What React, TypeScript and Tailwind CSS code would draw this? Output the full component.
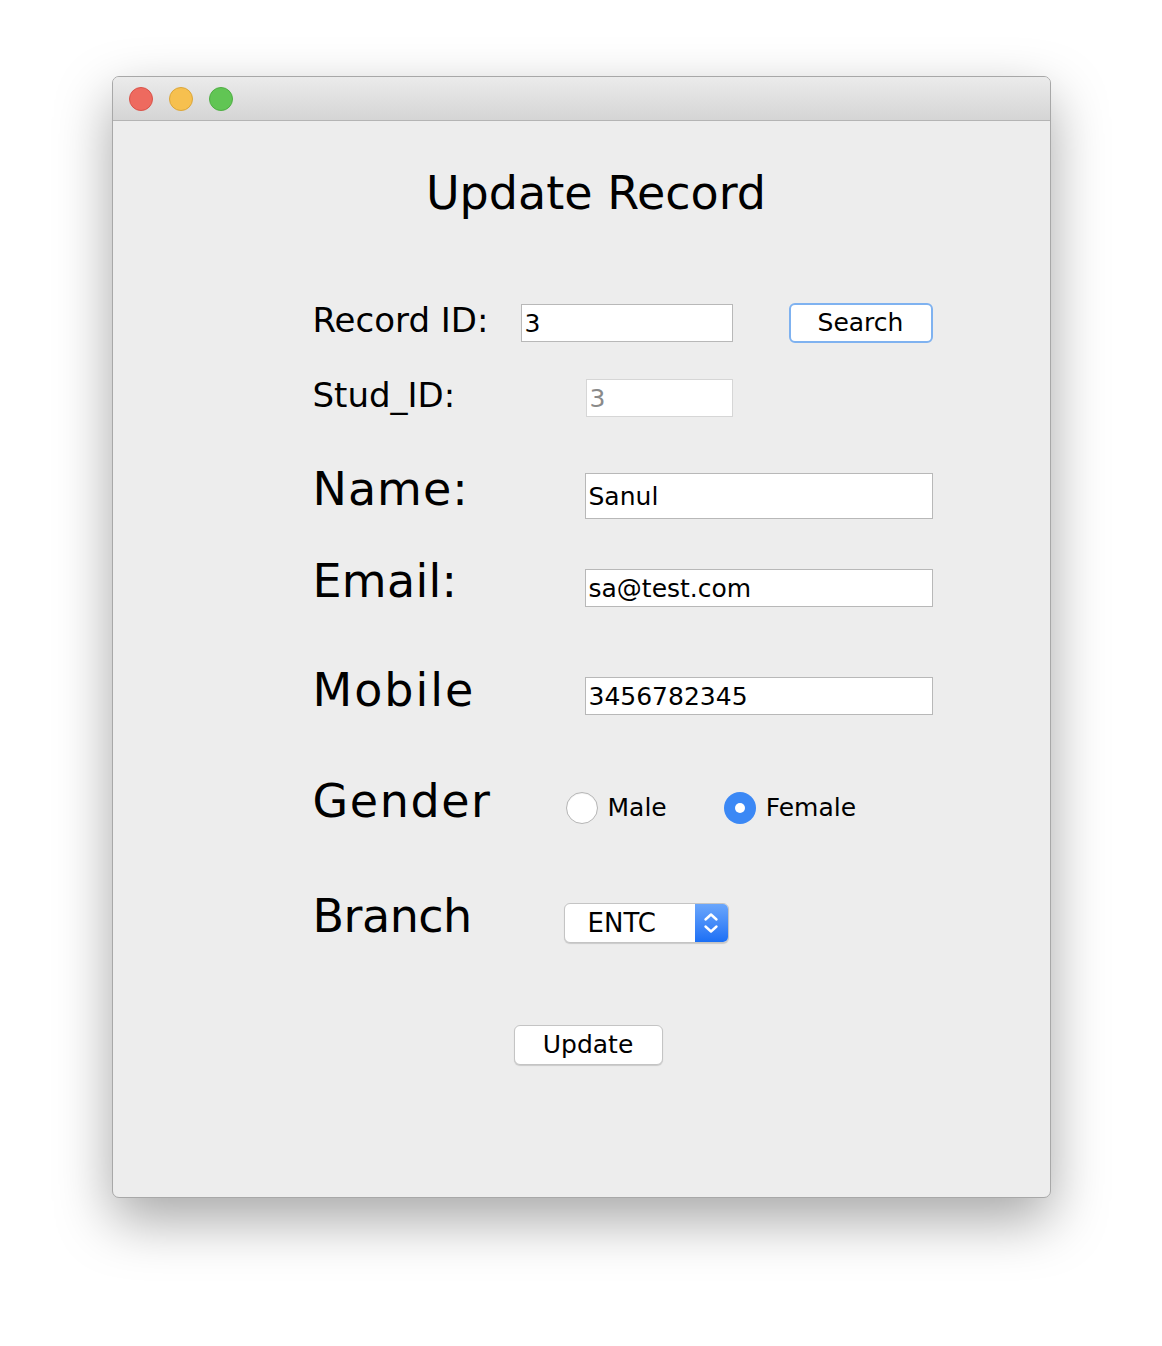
const font = { fontFamily: '"DejaVu Sans", sans-serif' };

const TextBox = ({ value, className = "", muted = false }: { value: string; className?: string; muted?: boolean }) => (
  <div
    className={`flex items-center border bg-white pl-[3px] text-[25px] leading-none ${
      muted ? "border-[#d6d6d6] text-[#8a8a8a]" : "border-[#b8b8b8] text-black"
    } ${className}`}
  >
    {value}
  </div>
);

const Radio = ({ label, checked }: { label: string; checked?: boolean }) => (
  <div className="flex items-center gap-[10px]">
    {checked ? (
      <span className="flex h-[32px] w-[32px] items-center justify-center rounded-full bg-[#3b88f5]">
        <span className="h-[10px] w-[10px] rounded-full bg-white" />
      </span>
    ) : (
      <span className="h-[32px] w-[32px] rounded-full border border-[#b5b5b5] bg-white shadow-[inset_0_1px_1px_rgba(0,0,0,0.05)]" />
    )}
    <span className="text-[25px] text-black">{label}</span>
  </div>
);

const Label = ({ children, className = "" }: { children: React.ReactNode; className?: string }) => (
  <div className={`text-black ${className}`}>{children}</div>
);

export default function App() {
  return (
    <div className="flex min-h-[1346px] justify-center bg-white pt-[76px]" style={font}>
      <div className="flex h-[1122px] w-[939px] flex-col overflow-hidden rounded-[7px] border border-[#a8a8a8] bg-[#ededed] shadow-[0_22px_55px_rgba(0,0,0,0.35)]">
        {/* title bar */}
        <div className="flex h-[44px] shrink-0 items-center gap-[16px] border-b border-[#b4b4b4] bg-gradient-to-b from-[#ebebeb] to-[#d5d5d5] pl-[16px]">
          <span className="h-[24px] w-[24px] rounded-full border border-[#d9534a] bg-[#ee6a5f]" />
          <span className="h-[24px] w-[24px] rounded-full border border-[#dba63a] bg-[#f6c04f]" />
          <span className="h-[24px] w-[24px] rounded-full border border-[#4fae44] bg-[#61c554]" />
        </div>

        <div className="flex flex-1 flex-col">
          <h1 className="mt-[42px] pl-[30px] text-center text-[46px] leading-[60px] text-black">Update Record</h1>

          <div className="flex flex-col pl-[200px]">
            {/* Record ID */}
            <div className="mt-[80px] flex h-[40px] items-center">
              <Label className="-mt-[6px] w-[208px] text-[34px]">Record ID:</Label>
              <TextBox value="3" className="h-[38px] w-[212px]" />
              <button className="ml-[56px] flex h-[40px] w-[144px] items-center justify-center rounded-[6px] border-2 border-[#7fb2f0] bg-white text-[25px] text-black">
                Search
              </button>
            </div>

            {/* Stud_ID */}
            <div className="mt-[36px] flex h-[38px] items-center">
              <Label className="-mt-[6px] w-[273px] text-[34px]">Stud_ID:</Label>
              <TextBox value="3" muted className="h-[38px] w-[147px]" />
            </div>

            {/* Name */}
            <div className="mt-[56px] flex h-[46px] items-center">
              <Label className="-mt-[14px] w-[272px] text-[46px] tracking-[1px]">Name:</Label>
              <TextBox value="Sanul" className="h-[46px] w-[348px]" />
            </div>

            {/* Email */}
            <div className="mt-[50px] flex h-[38px] items-center">
              <Label className="-mt-[14px] w-[272px] text-[46px] tracking-[0.3px]">Email:</Label>
              <TextBox value="sa@test.com" className="h-[38px] w-[348px]" />
            </div>

            {/* Mobile */}
            <div className="mt-[70px] flex h-[38px] items-center">
              <Label className="-mt-[12px] w-[272px] text-[46px] tracking-[2px]">Mobile</Label>
              <TextBox value="3456782345" className="h-[38px] w-[348px]" />
            </div>

            {/* Gender */}
            <div className="mt-[76px] flex h-[34px] items-center">
              <Label className="-mt-[14px] w-[253px] text-[46px] tracking-[1.6px]">Gender</Label>
              <Radio label="Male" />
              <div className="ml-[57px]">
                <Radio label="Female" checked />
              </div>
            </div>

            {/* Branch */}
            <div className="mt-[78px] flex h-[40px] items-center">
              <Label className="-mt-[14px] w-[251px] text-[46px] tracking-[-0.5px]">Branch</Label>
              <div className="flex h-[40px] w-[165px] overflow-hidden rounded-[6px] border border-[#c4c4c4] bg-white shadow-[0_1px_1px_rgba(0,0,0,0.15)]">
                <div className="flex flex-1 items-center pl-[23px] text-[26px] text-black">ENTC</div>
                <div className="flex w-[33px] items-center justify-center bg-gradient-to-b from-[#6aa6fb] to-[#1a6ff5]">
                  <svg width="16" height="28" viewBox="0 0 16 28" fill="none" stroke="white" strokeWidth="2.4" strokeLinecap="round" strokeLinejoin="round">
                    <path d="M2.5 10.5 L8 5.5 L13.5 10.5" />
                    <path d="M2.5 17.5 L8 22.5 L13.5 17.5" />
                  </svg>
                </div>
              </div>
            </div>
          </div>

          {/* Update */}
          <div className="mt-[82px] flex pl-[401px]">
            <button className="flex h-[40px] w-[149px] items-center justify-center rounded-[6px] border border-[#c4c4c4] bg-white text-[25px] text-black shadow-[0_1px_1px_rgba(0,0,0,0.15)]">
              Update
            </button>
          </div>
        </div>
      </div>
    </div>
  );
}
